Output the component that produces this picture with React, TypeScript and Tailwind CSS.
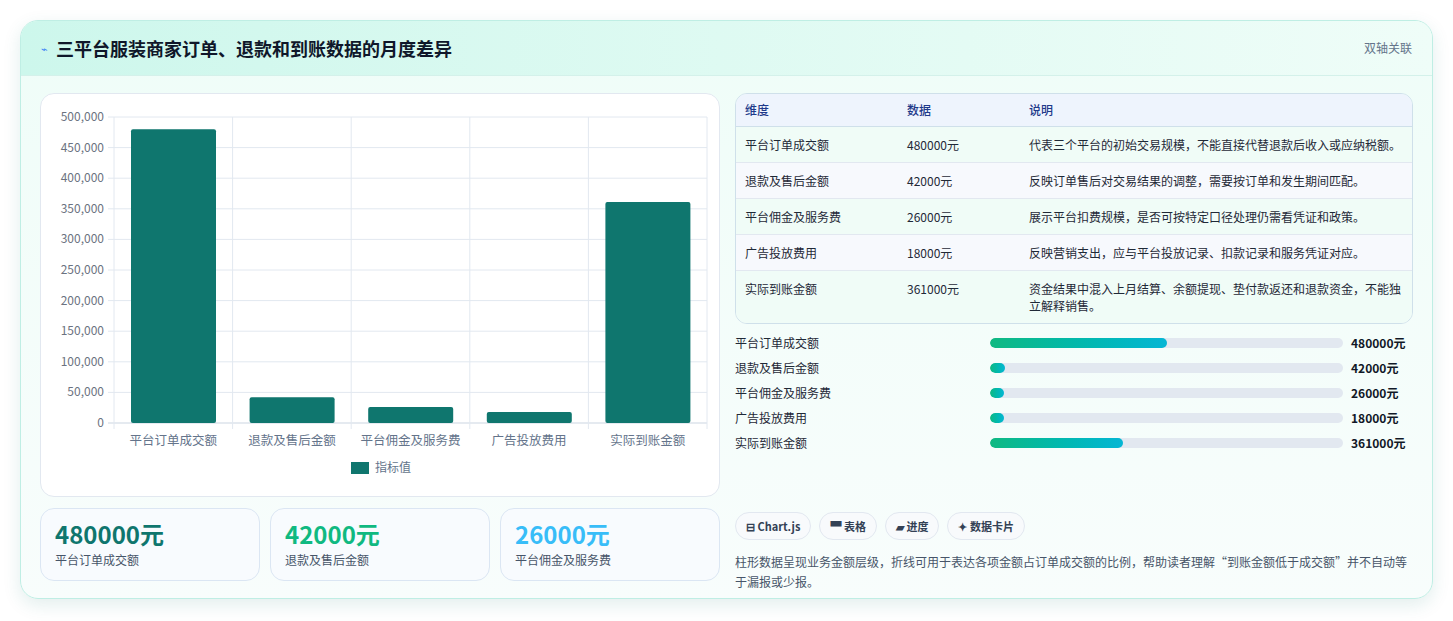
import React from 'react'

const rows = [
  { name: '平台订单成交额', value: 480000, desc: '代表三个平台的初始交易规模，不能直接代替退款后收入或应纳税额。' },
  { name: '退款及售后金额', value: 42000, desc: '反映订单售后对交易结果的调整，需要按订单和发生期间匹配。' },
  { name: '平台佣金及服务费', value: 26000, desc: '展示平台扣费规模，是否可按特定口径处理仍需看凭证和政策。' },
  { name: '广告投放费用', value: 18000, desc: '反映营销支出，应与平台投放记录、扣款记录和服务凭证对应。' },
  { name: '实际到账金额', value: 361000, desc: '资金结果中混入上月结算、余额提现、垫付款返还和退款资金，不能独立解释销售。' },
]

const font = { fontFamily: '"Noto Sans CJK SC", "Noto Sans", sans-serif' }

const Chart = () => {
  const left = 73, right = 666, top = 23, bottom = 329
  const h = bottom - top
  const cw = (right - left) / 5
  const ticks = [0, 50000, 100000, 150000, 200000, 250000, 300000, 350000, 400000, 450000, 500000]
  return (
    <svg width="679" height="403" viewBox="0 0 679 403" style={font}>
      {ticks.map((t) => {
        const y = bottom - (t / 500000) * h
        return (
          <g key={t}>
            <line x1={left - 6} x2={right} y1={y} y2={y} stroke={t === 0 ? '#cbd5e1' : '#e2e8f0'} />
            <text x={left - 10} y={y + 4} textAnchor="end" fontSize="12" fill="#6b7280">{t.toLocaleString('en-US')}</text>
          </g>
        )
      })}
      {[0, 1, 2, 3, 4, 5].map((i) => (
        <line key={i} x1={left + i * cw} x2={left + i * cw} y1={top} y2={bottom + 6} stroke="#e2e8f0" />
      ))}
      {rows.map((r, i) => {
        const bh = (r.value / 500000) * h
        const x = left + i * cw + 17
        return (
          <g key={r.name}>
            <rect x={x} y={bottom - bh} width={85} height={bh} rx={2} fill="#0f766e" />
            <text x={left + i * cw + cw / 2} y={351} textAnchor="middle" fontSize="12.5" fill="#64748b">{r.name}</text>
          </g>
        )
      })}
      <rect x={310} y={368} width={18} height={12} fill="#0f766e" />
      <text x={334} y={378} fontSize="12" fill="#64748b">指标值</text>
    </svg>
  )
}

export default function App() {
  return (
    <div className="w-[1453px] h-[621px] bg-white pt-[20px] px-[20px]" style={font}>
      <div className="w-[1413px] h-[579px] rounded-[18px] border border-[#bfeee4] bg-gradient-to-b from-[#effdf8] to-[#f8fdfc] shadow-[0_6px_18px_rgba(15,118,110,0.12)] overflow-hidden flex flex-col">
        <div className="h-[55px] flex items-center justify-between px-[20px] bg-gradient-to-r from-[#cdf7ec] to-[#effdf8] border-b border-[#d4f1ea]">
          <div className="flex items-center gap-[8px]">
            <span className="text-[11px] text-[#3b82f6]">⌁</span>
            <h1 className="text-[18px] font-bold text-[#0f172a]">三平台服装商家订单、退款和到账数据的月度差异</h1>
          </div>
          <span className="text-[12px] text-[#64748b]">双轴关联</span>
        </div>
        <div className="flex gap-[15px] px-[19px] pt-[17px]">
          <div className="w-[680px] flex flex-col gap-[11px]">
            <div className="h-[404px] rounded-[14px] border border-[#e2e8f0] bg-white overflow-hidden">
              <Chart />
            </div>
            <div className="flex gap-[10px]">
              {[
                { v: '480000元', l: '平台订单成交额', c: 'text-[#0f766e]' },
                { v: '42000元', l: '退款及售后金额', c: 'text-[#10b981]' },
                { v: '26000元', l: '平台佣金及服务费', c: 'text-[#38bdf8]' },
              ].map((k) => (
                <div key={k.l} className="flex-1 h-[73px] rounded-[14px] border border-[#dbe6f3] bg-[#f8fbfe] px-[14px] pt-[10px]">
                  <div className={`text-[24px] font-bold leading-[30px] ${k.c}`}>{k.v}</div>
                  <div className="text-[12px] text-[#475569] mt-[2px]">{k.l}</div>
                </div>
              ))}
            </div>
          </div>
          <div className="w-[680px] flex flex-col">
            <div className="rounded-[12px] border border-[#cfe0ea] overflow-hidden text-[12px]">
              <div className="flex h-[33px] items-center bg-[#eef4fd] border-b border-[#cfe0ea] text-[#1e3a8a] font-medium">
                <div className="w-[162px] pl-[9px]">维度</div>
                <div className="w-[122px] pl-[9px]">数据</div>
                <div className="flex-1 pl-[9px]">说明</div>
              </div>
              {rows.map((r, i) => (
                <div key={r.name} className={`flex py-[9px] text-[#1f2937] ${i % 2 ? 'bg-[#f7f9fd]' : 'bg-[#f0fcf7]'} ${i < 4 ? 'border-b border-[#e2e8f0]' : ''}`}>
                  <div className="w-[162px] pl-[9px] leading-[17px]">{r.name}</div>
                  <div className="w-[122px] pl-[9px] leading-[17px]">{r.value}元</div>
                  <div className="flex-1 pl-[9px] pr-[10px] leading-[17px]">{r.desc}</div>
                </div>
              ))}
            </div>
            <div className="flex flex-col gap-[7px] mt-[10px]">
              {rows.map((r) => (
                <div key={r.name} className="flex items-center h-[18px] text-[12px]">
                  <div className="w-[255px] text-[#1f2937]">{r.name}</div>
                  <div className="w-[353px] h-[10px] rounded-full bg-[#e2e8f0] overflow-hidden">
                    <div className="h-full rounded-full bg-gradient-to-r from-[#10b981] to-[#06b6d4] min-w-[14px]" style={{ width: `${(r.value / 960000) * 100}%` }} />
                  </div>
                  <div className="pl-[8px] font-bold text-[#111827]">{r.value}元</div>
                </div>
              ))}
            </div>
            <div className="flex gap-[8px] mt-[60px]">
              {['⊟ Chart.js', '▀ 表格', '▰ 进度', '✦ 数据卡片'].map((t) => (
                <span key={t} className="h-[28px] px-[10px] flex items-center rounded-full border border-[#e2e8f0] bg-[#f8fafc] text-[11px] font-bold text-[#334155]">{t}</span>
              ))}
            </div>
            <p className="mt-[12px] text-[12px] leading-[20px] text-[#475569]">柱形数据呈现业务金额层级，折线可用于表达各项金额占订单成交额的比例，帮助读者理解“到账金额低于成交额”并不自动等于漏报或少报。</p>
          </div>
        </div>
      </div>
    </div>
  )
}
